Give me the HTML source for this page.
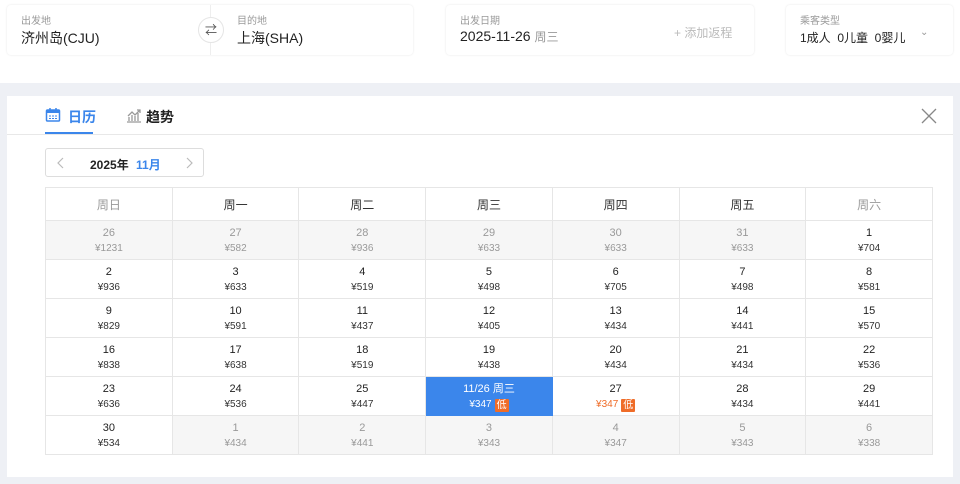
<!DOCTYPE html>
<html><head><meta charset="utf-8"><style>
*{box-sizing:border-box;margin:0;padding:0}
body{width:960px;height:484px;overflow:hidden;background:#fff;font-family:"Liberation Sans","Noto Sans CJK SC",sans-serif;color:#222;position:relative}
.card{position:absolute;top:5px;height:50px;background:#fff;border-radius:4px;box-shadow:0 0 2px rgba(0,0,0,.1)}
.lbl{position:absolute;top:7px;font-size:10px;color:#999}
.val{position:absolute;top:23px;font-size:14px;color:#222}
.band{position:absolute;top:83px;left:0;width:960px;height:401px;background:#eef0f5}
.panel{position:absolute;top:96px;left:7px;width:946px;height:381px;background:#fff}
table{position:absolute;left:45px;top:187px;border-collapse:collapse;width:888px}
td,th{border:1px solid #e6e6e6;width:126.86px;text-align:center;font-size:11px;font-weight:normal}
th{height:33px;color:#333;font-size:12px}
td{height:39px;color:#222;line-height:15px;padding-top:2px}
td small{display:block;font-size:10px;color:#333}
td.g{background:#f6f6f6;color:#999}td.g small{color:#999}
td.sel{background:#3b86eb;color:#fff;border-color:#3b86eb}td.sel small{color:#fff}
.low{display:inline-block;background:#ef6c28;color:#fff;font-size:10px;line-height:13px;padding:0 2px;border-radius:1px;margin-left:3px;vertical-align:-1px}
</style></head><body>
<div class="card" style="left:7px;width:406px">
 <div class="lbl" style="left:14px">出发地</div><div class="val" style="left:14px">济州岛(CJU)</div>
 <div style="position:absolute;left:203px;top:0;width:1px;height:50px;background:#eee"></div>
 <div style="position:absolute;left:191px;top:12px;width:26px;height:26px;border-radius:50%;border:1px solid #e5e5e5;background:#fff;font-size:12px;text-align:center;line-height:24px;color:#555">⇄</div>
 <div class="lbl" style="left:230px">目的地</div><div class="val" style="left:230px">上海(SHA)</div>
</div>
<div class="card" style="left:446px;width:308px">
 <div class="lbl" style="left:14px">出发日期</div><div class="val" style="left:14px">2025-11-26 <span style="font-size:12px;color:#999">周三</span></div>
 <div style="position:absolute;left:228px;top:19px;font-size:12px;color:#bbb">+ 添加返程</div>
</div>
<div class="card" style="left:786px;width:167px">
 <div class="lbl" style="left:14px">乘客类型</div><div class="val" style="left:14px;font-size:12px;top:24px">1成人&nbsp;&nbsp;0儿童&nbsp;&nbsp;0婴儿</div>
 <div style="position:absolute;left:134px;top:22px;font-size:10px;color:#999">⌄</div>
</div>
<div class="band"></div>
<div class="panel">
 <div style="position:absolute;left:0;top:38px;width:946px;height:1px;background:#e8e8e8"></div>
 <svg style="position:absolute;left:38px;top:11px" width="16" height="16" viewBox="0 0 16 16"><rect x="1.5" y="3" width="13" height="11" rx="1" fill="none" stroke="#3b86eb" stroke-width="1.5"/><rect x="1.5" y="3" width="13" height="3" fill="#3b86eb"/><path d="M5 1v3M11 1v3" stroke="#3b86eb" stroke-width="1.5"/><path d="M4 9h2M7 9h2M10 9h2M4 11.5h2M7 11.5h2M10 11.5h2" stroke="#3b86eb"/></svg>
 <div style="position:absolute;left:61px;top:11px;font-size:14px;font-weight:bold;color:#3b86eb">日历</div>
 <div style="position:absolute;left:38px;top:36px;width:48px;height:2px;background:#3b86eb"></div>
 <svg style="position:absolute;left:119px;top:11px" width="16" height="16" viewBox="0 0 16 16"><path d="M1 15h14M3 14V10M6 14V8M9 14V9M12 14V6M2 9l4-4 3 3 5-5M11 3h3v3" stroke="#999" fill="none" stroke-width="1.3"/></svg>
 <div style="position:absolute;left:139px;top:11px;font-size:14px;font-weight:bold;color:#222">趋势</div>
 <svg style="position:absolute;left:914px;top:12px" width="16" height="16" viewBox="0 0 16 16"><path d="M1 1L15 15M15 1L1 15" stroke="#888" stroke-width="1.3"/></svg>
 <div style="position:absolute;left:38px;top:52px;width:159px;height:29px;border:1px solid #ddd;border-radius:3px">
  <svg style="position:absolute;left:11px;top:8px" width="8" height="12" viewBox="0 0 8 12"><path d="M6 1L1 6l5 5" stroke="#bbb" fill="none" stroke-width="1.2"/></svg>
  <span style="position:absolute;left:44px;top:7px;font-size:12px;font-weight:bold">2025年 <span style="color:#3b86eb;margin-left:4px">11月</span></span>
  <svg style="position:absolute;left:139px;top:8px" width="8" height="12" viewBox="0 0 8 12"><path d="M2 1l5 5-5 5" stroke="#bbb" fill="none" stroke-width="1.2"/></svg>
 </div>
</div>
<table>
<tr><th style="color:#999">周日</th><th>周一</th><th>周二</th><th>周三</th><th>周四</th><th>周五</th><th style="color:#999">周六</th></tr>
<tr><td class="g">26<small>¥1231</small></td><td class="g">27<small>¥582</small></td><td class="g">28<small>¥936</small></td><td class="g">29<small>¥633</small></td><td class="g">30<small>¥633</small></td><td class="g">31<small>¥633</small></td><td>1<small>¥704</small></td></tr>
<tr><td>2<small>¥936</small></td><td>3<small>¥633</small></td><td>4<small>¥519</small></td><td>5<small>¥498</small></td><td>6<small>¥705</small></td><td>7<small>¥498</small></td><td>8<small>¥581</small></td></tr>
<tr><td>9<small>¥829</small></td><td>10<small>¥591</small></td><td>11<small>¥437</small></td><td>12<small>¥405</small></td><td>13<small>¥434</small></td><td>14<small>¥441</small></td><td>15<small>¥570</small></td></tr>
<tr><td>16<small>¥838</small></td><td>17<small>¥638</small></td><td>18<small>¥519</small></td><td>19<small>¥438</small></td><td>20<small>¥434</small></td><td>21<small>¥434</small></td><td>22<small>¥536</small></td></tr>
<tr><td>23<small>¥636</small></td><td>24<small>¥536</small></td><td>25<small>¥447</small></td><td class="sel">11/26 周三<small>¥347<span class="low">低</span></small></td><td>27<small style="color:#ef6c28">¥347<span class="low">低</span></small></td><td>28<small>¥434</small></td><td>29<small>¥441</small></td></tr>
<tr><td>30<small>¥534</small></td><td class="g">1<small>¥434</small></td><td class="g">2<small>¥441</small></td><td class="g">3<small>¥343</small></td><td class="g">4<small>¥347</small></td><td class="g">5<small>¥343</small></td><td class="g">6<small>¥338</small></td></tr>
</table>
</body></html>
